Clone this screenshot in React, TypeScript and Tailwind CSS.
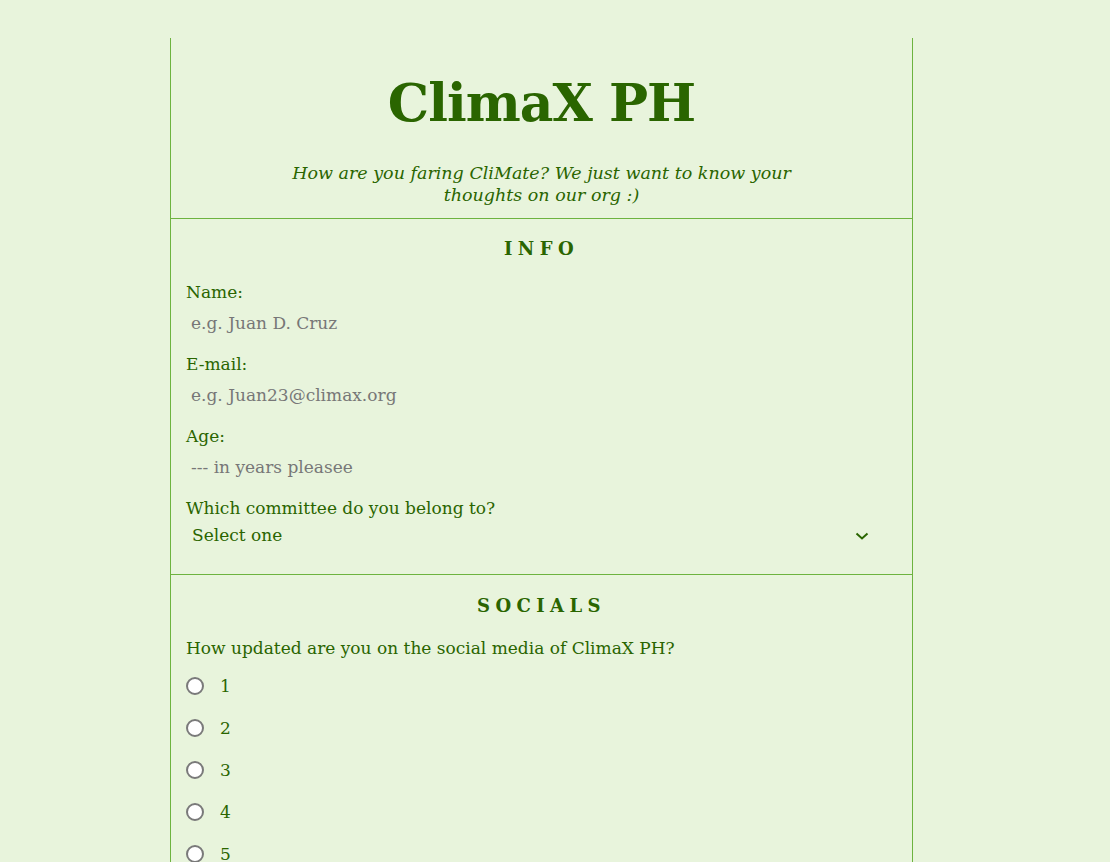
import { useState } from "react";

const serif = "font-['DejaVu_Serif',Georgia,serif]";

function Field({
  label,
  placeholder,
  type = "text",
}: {
  label: string;
  placeholder: string;
  type?: string;
}) {
  return (
    <label className="flex flex-col">
      <span className="text-[17px] leading-[22px]">{label}</span>
      <input
        type={type}
        placeholder={placeholder}
        className="mt-[9px] bg-transparent px-[5px] py-[0px] text-[17px] leading-[22px] outline-none placeholder:text-[#777]"
      />
    </label>
  );
}

export default function App() {
  const [rating, setRating] = useState<string>("");
  const [committee, setCommittee] = useState("");

  return (
    <div
      className={`min-h-[862px] bg-[#e8f4dc] pt-[38px] text-[#2a6500] ${serif}`}
    >
      <form className="ml-[170px] w-[743px] border-x border-[#6db33f]">
        {/* Header */}
        <header className="flex flex-col items-center border-b border-[#6db33f] pb-[12px]">
          <h1 className="mt-[32px] text-[52px] font-bold leading-[66px] tracking-[-1px]">
            ClimaX PH
          </h1>
          <p className="mt-[26px] text-center text-[17.5px] italic leading-[22px]">
            <span className="whitespace-nowrap">
              How are you faring CliMate? We just want to know your
            </span>
            <br />
            <span className="whitespace-nowrap">thoughts on our org :)</span>
          </p>
        </header>

        {/* Info */}
        <section className="border-b border-[#6db33f] px-[15px] pb-[26px]">
          <h2 className="mt-[18px] mb-[20px] text-center text-[18px] font-bold leading-[24px] tracking-[0.3em]">
            INFO
          </h2>
          <div className="flex flex-col gap-[19px]">
            <Field label="Name:" placeholder="e.g. Juan D. Cruz" />
            <Field label="E-mail:" placeholder="e.g. Juan23@climax.org" type="email" />
            <Field label="Age:" placeholder="--- in years pleasee" type="number" />
            <label className="flex flex-col">
              <span className="text-[17px] leading-[22px]">
                Which committee do you belong to?
              </span>
              <div className="relative mt-[5px] w-[700px]">
                <select
                  value={committee}
                  onChange={(e) => setCommittee(e.target.value)}
                  className="w-full appearance-none bg-transparent px-[6px] text-[17px] leading-[22px] text-[#2a6500] outline-none"
                >
                  <option value="">Select one</option>
                  <option value="ops">Operations</option>
                  <option value="comms">Communications</option>
                  <option value="research">Research</option>
                </select>
                <svg
                  viewBox="0 0 14 8"
                  className="pointer-events-none absolute right-[17px] top-[8px] h-[8px] w-[14px]"
                  fill="none"
                  stroke="#2a6500"
                  strokeWidth="2"
                >
                  <path d="M1.5 1.5l5.5 5 5.5-5" />
                </svg>
              </div>
            </label>
          </div>
        </section>

        {/* Socials */}
        <section className="px-[15px] pb-[20px]">
          <h2 className="mt-[19px] mb-[19px] text-center text-[18px] font-bold leading-[24px] tracking-[0.3em]">
            SOCIALS
          </h2>
          <p className="text-[17px] leading-[22px]">
            How updated are you on the social media of ClimaX PH?
          </p>
          <div className="mt-[16px] flex flex-col gap-[20px]">
            {["1", "2", "3", "4", "5"].map((n) => (
              <label key={n} className="flex items-center gap-[16px]">
                <input
                  type="radio"
                  name="rating"
                  value={n}
                  checked={rating === n}
                  onChange={() => setRating(n)}
                  className="m-0 h-[18px] w-[18px] appearance-none rounded-full border-2 border-[#7a7a7a] bg-white checked:border-[5px] checked:border-[#2a6500]"
                />
                <span className="text-[17px] leading-[22px]">{n}</span>
              </label>
            ))}
          </div>
        </section>
      </form>
    </div>
  );
}
